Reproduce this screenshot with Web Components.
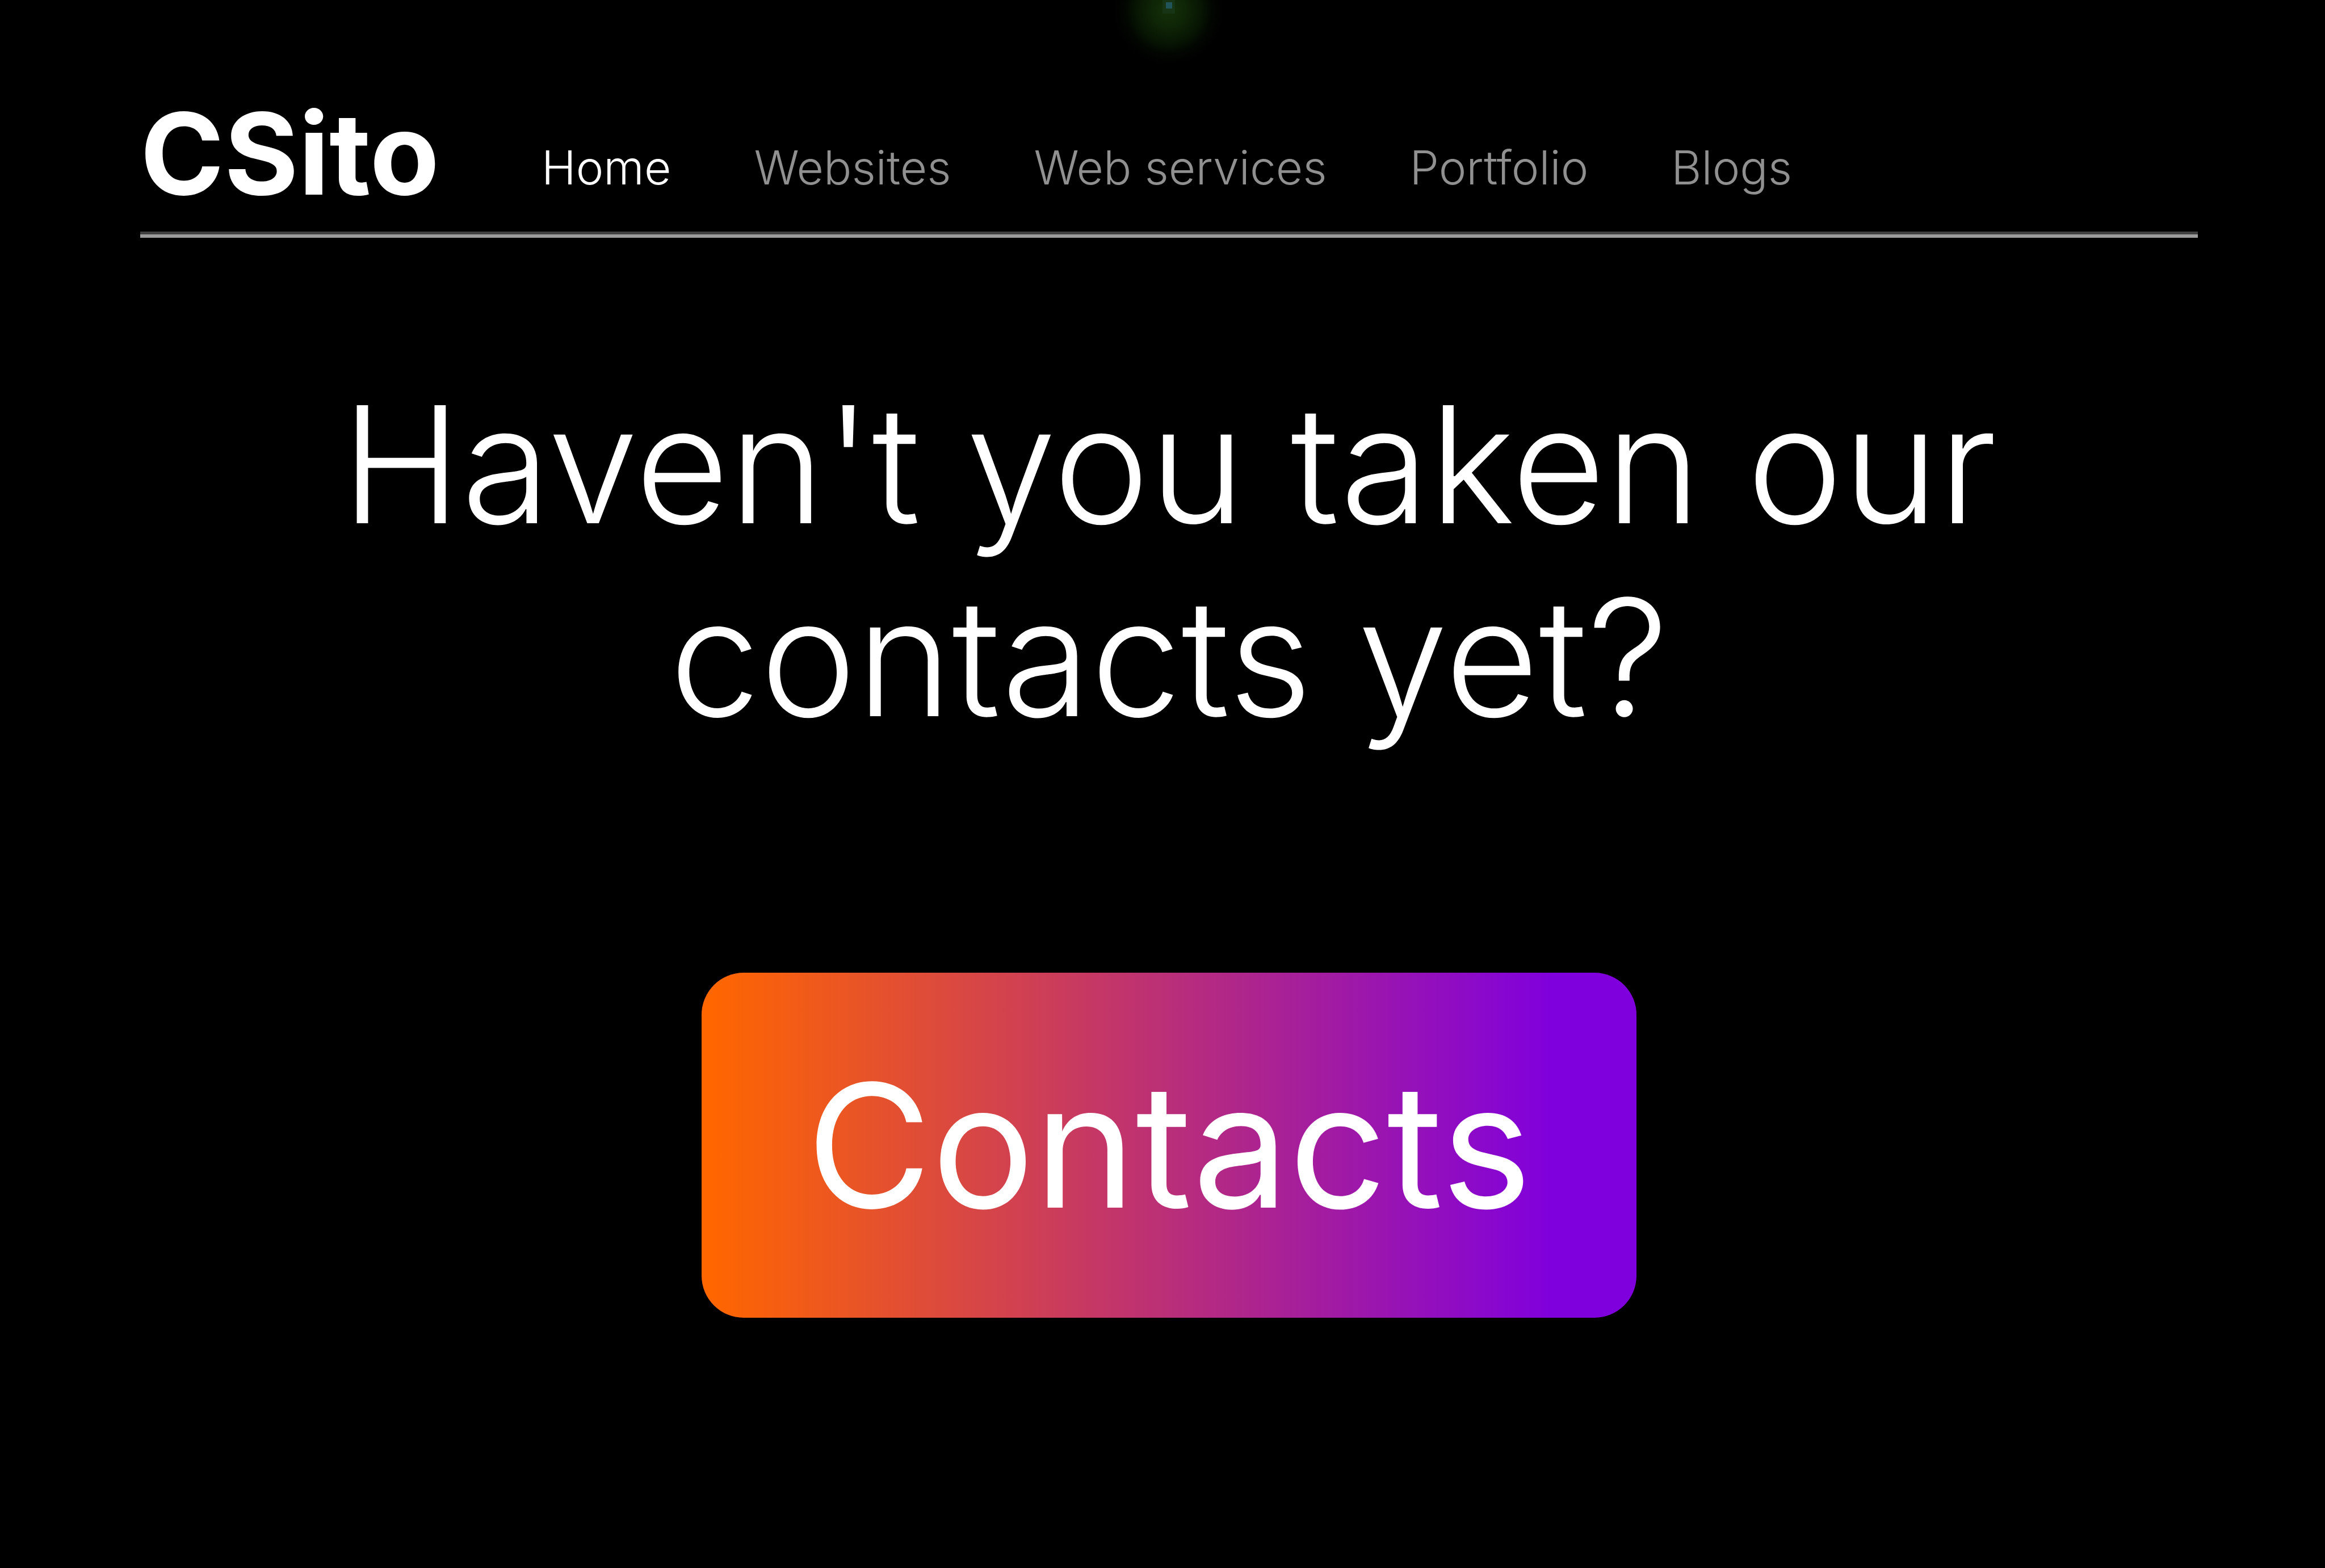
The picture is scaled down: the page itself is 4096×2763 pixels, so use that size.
<!DOCTYPE html>
<html lang="en">
<head>
<meta charset="utf-8">
<title>CSito</title>
<style>
  html { background: #000; }
  body { margin: 0; background: #000; color: #fff; font-family: Inter, sans-serif; font-optical-sizing: none; }
</style>
</head>
<body>
<site-page>
  <site-header slot="header">
    <site-link href="#home" current>Home</site-link>
    <site-link href="#websites">Websites</site-link>
    <site-link href="#services">Web services</site-link>
    <site-link href="#portfolio">Portfolio</site-link>
    <site-link href="#blogs">Blogs</site-link>
  </site-header>
  <contact-callout>
    Haven't you taken our contacts yet?
    <gradient-button slot="action">Contacts</gradient-button>
  </contact-callout>
</site-page>
<script>
  const define = (name, html, setup) => customElements.define(name, class extends HTMLElement {
    constructor() {
      super();
      this.attachShadow({ mode: 'open' }).innerHTML = html;
    }
    connectedCallback() { if (setup) setup(this); }
  });

  define('site-page', `
    <style>
      :host { display: block; position: relative; box-sizing: border-box; min-height: 100vh; padding: 0 224px 0 247px; overflow: hidden; }
      svg { position: absolute; top: 0; left: 50%; width: 260px; height: 120px; margin-left: -118px; }
    </style>
    <svg viewBox="0 0 260 120" aria-hidden="true">
      <defs>
        <radialGradient id="g" gradientUnits="userSpaceOnUse" cx="129" cy="18" r="96">
          <stop offset="0" stop-color="#142f09"/>
          <stop offset=".3" stop-color="#0f2606"/>
          <stop offset=".6" stop-color="#071503"/>
          <stop offset=".8" stop-color="#020601"/>
          <stop offset="1" stop-color="#000"/>
        </radialGradient>
      </defs>
      <rect width="260" height="120" fill="url(#g)"/>
      <rect x="118" y="0" width="22" height="24" fill="#1b3a1c" opacity=".6"/>
      <rect x="124" y="4" width="11" height="11" fill="#205458"/>
    </svg>
    <slot name="header"></slot>
    <main><slot></slot></main>`);

  define('site-header', `
    <style>
      :host { display: block; }
      header { display: flex; align-items: flex-end; gap: 180px; padding: 150px 0 23px; border-bottom: 6px solid #9c9c9c; box-shadow: inset 0 -5px #404040; }
      .logo { color: #fff; text-decoration: none; font-size: 200px; line-height: 240px; font-weight: 700; }
      nav { display: flex; gap: 146px; padding-bottom: 44px; }
    </style>
    <header>
      <a class="logo" href="#home">CSito</a>
      <nav aria-label="Main"><slot></slot></nav>
    </header>`);

  define('site-link', `
    <style>
      :host { display: block; }
      a { display: block; color: #909090; text-decoration: none; font-size: 82px; line-height: 100px; font-weight: 350; white-space: nowrap; }
      :host([current]) a { color: #fff; }
    </style>
    <a><slot></slot></a>`, el => {
      const link = el.shadowRoot.querySelector('a');
      link.href = el.getAttribute('href');
      if (el.hasAttribute('current')) link.setAttribute('aria-current', 'page');
    });

  define('contact-callout', `
    <style>
      :host { display: flex; flex-direction: column; align-items: center; gap: 386px; padding-top: 229px; }
      h1 { margin: 0; max-width: 3200px; text-align: center; font-size: 286px; line-height: 340px; font-weight: 270; }
    </style>
    <h1><slot></slot></h1>
    <slot name="action"></slot>`);

  define('gradient-button', `
    <style>
      :host { display: block; }
      button { display: block; border: 0; border-radius: 74px; padding: 119px 185px; color: #fff; cursor: pointer;
        background: linear-gradient(90deg, #ff6600 1%, #8000dd 91%);
        font-family: inherit; font-optical-sizing: inherit; font-size: 302px; line-height: 370px; font-weight: 400; }
    </style>
    <button type="button"><slot></slot></button>`);
</script>
</body>
</html>
